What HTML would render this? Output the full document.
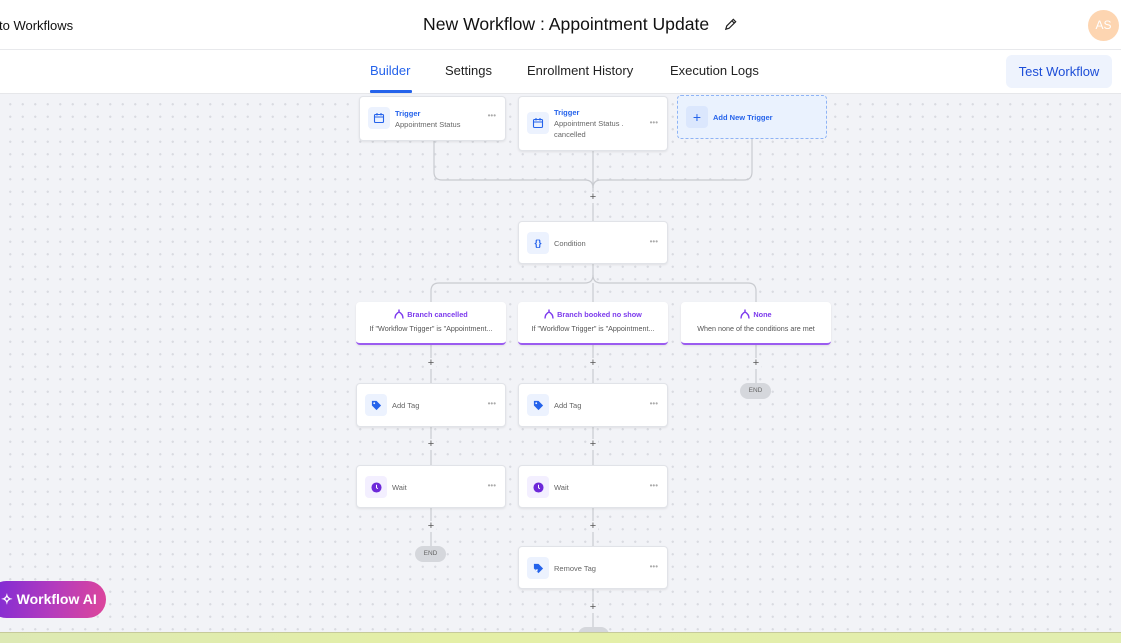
<!DOCTYPE html>
<html><head><meta charset="utf-8"><style>
*{box-sizing:border-box;margin:0;padding:0}
body{width:1121px;height:643px;overflow:hidden;position:relative;font-family:"Liberation Sans",sans-serif;background:#f2f3f7}
.canvas{position:absolute;left:0;top:94px;width:1121px;height:539px;background-color:#f2f3f7;background-image:radial-gradient(circle,#d9dbe1 1px,transparent 1.3px);background-size:12.5px 12.5px;background-position:4px 4px}
.hdr{position:absolute;left:0;top:0;width:1121px;height:50px;background:#fff;border-bottom:1px solid #e8e9ec}
.nav{position:absolute;left:0;top:50px;width:1121px;height:44px;background:#fff;border-bottom:1px solid #e6e7ea}
.abs{position:absolute}
.card{position:absolute;background:#fff;border:1px solid #e1e3e8;border-radius:4px;box-shadow:0 1px 2px rgba(0,0,0,.08)}
.ic{position:absolute;left:8px;width:22px;height:22px;border-radius:4px;background:#ecf2fe;display:flex;align-items:center;justify-content:center}
.ic.p{background:#f3efff}
.t{position:absolute;font-size:7.5px;color:#666}
.dots{position:absolute;right:9px;font-size:8px;color:#aaa}
.plus{position:absolute;font-size:11px;color:#555;width:10px;text-align:center;line-height:10px;background:#f2f3f7}
.end{position:absolute;width:31px;height:16px;border-radius:8px;background:#d5d7dc;font-size:6.5px;color:#666;text-align:center;line-height:16px}
.br{position:absolute;background:#fff;border-radius:4px;border-bottom:2px solid #9b5cf0;box-shadow:0 1px 2px rgba(0,0,0,.08);height:43px;text-align:center}
.br .h{font-size:7.3px;color:#7c3aed;font-weight:bold;margin-top:7px;display:flex;justify-content:center;align-items:center;gap:3px}
.br .s{font-size:7.2px;color:#555;margin-top:5px}
</style></head><body>
<div class="canvas"></div>
<div class="hdr">
 <div class="abs" style="left:-1px;top:18px;font-size:13px;color:#111">to Workflows</div>
 <div class="abs" style="left:423px;top:14px;font-size:17.6px;color:#111">New Workflow : Appointment Update</div>
 <svg class="abs" style="left:723px;top:17px" width="15" height="15" viewBox="0 0 16 16"><path d="M3 13l1-3.5 7-7 2.5 2.5-7 7zM9.5 4l2.5 2.5M3 13l3-0.8" fill="none" stroke="#222" stroke-width="1.3"/></svg>
 <div class="abs" style="left:1088px;top:10px;width:31px;height:31px;border-radius:50%;background:#fdd5b1;color:#fff;font-size:12px;text-align:center;line-height:31px">AS</div>
</div>
<div class="nav">
 <div class="abs" style="left:370px;top:13px;font-size:13px;color:#2563eb">Builder</div>
 <div class="abs" style="left:370px;top:40px;width:42px;height:3px;background:#2563eb;border-radius:1px"></div>
 <div class="abs" style="left:445px;top:13px;font-size:13px;color:#222">Settings</div>
 <div class="abs" style="left:527px;top:13px;font-size:13px;color:#222">Enrollment History</div>
 <div class="abs" style="left:670px;top:13px;font-size:13px;color:#222">Execution Logs</div>
 <div class="abs" style="left:1006px;top:5px;width:106px;height:33px;border-radius:6px;background:#eef3fd;color:#1d4ed8;font-size:13px;text-align:center;line-height:33px">Test Workflow</div>
</div>
<svg class="abs" style="left:0;top:0" width="1121" height="643">
<g fill="none" stroke="#c9cbd0" stroke-width="1.2">
<path d="M434 140V172q0 8 8 8H585q8 0 8 8"/>
<path d="M752 138V172q0 8 -8 8H601q-8 0 -8 8"/>
<path d="M593 150V192M593 203V221"/>
<path d="M593 263V275q0 8-8 8H439q-8 0-8 8V302"/>
<path d="M593 283V302M593 275q0 8 8 8H748q8 0 8 8V302"/>
<path d="M431 344V358M431 369V383M431 426V439M431 450V465M431 507V521M431 532V546"/>
<path d="M593 344V358M593 369V383M593 426V439M593 450V465M593 507V521M593 532V546M593 588V602M593 613V630"/>
<path d="M756 344V358M756 369V383"/>
</g></svg>
<div class="plus" style="left:588px;top:192px">+</div>
<div class="plus" style="left:426px;top:358px">+</div>
<div class="plus" style="left:588px;top:358px">+</div>
<div class="plus" style="left:751px;top:358px">+</div>
<div class="plus" style="left:426px;top:439px">+</div>
<div class="plus" style="left:588px;top:439px">+</div>
<div class="plus" style="left:426px;top:521px">+</div>
<div class="plus" style="left:588px;top:521px">+</div>
<div class="plus" style="left:588px;top:602px">+</div>
<div class="end" style="left:740px;top:383px">END</div>
<div class="end" style="left:415px;top:546px">END</div>
<div class="end" style="left:578px;top:627px"></div>

<div class="card" style="left:359px;top:96px;width:147px;height:45px">
 <div class="ic" style="top:10px"><svg width="12" height="12" viewBox="0 0 12 12"><rect x="1.5" y="2.5" width="9" height="8" rx="1" fill="none" stroke="#2563eb" stroke-width="1.1"/><path d="M1.5 5h9M4 1v2.5M8 1v2.5" stroke="#2563eb" stroke-width="1.1"/></svg></div>
 <div class="t" style="left:35px;top:12px;color:#2563eb;font-weight:bold">Trigger</div>
 <div class="t" style="left:35px;top:23px">Appointment Status</div>
 <div class="dots" style="top:14px">•••</div>
</div>
<div class="card" style="left:518px;top:96px;width:150px;height:55px">
 <div class="ic" style="top:15px"><svg width="12" height="12" viewBox="0 0 12 12"><rect x="1.5" y="2.5" width="9" height="8" rx="1" fill="none" stroke="#2563eb" stroke-width="1.1"/><path d="M1.5 5h9M4 1v2.5M8 1v2.5" stroke="#2563eb" stroke-width="1.1"/></svg></div>
 <div class="t" style="left:35px;top:11px;color:#2563eb;font-weight:bold">Trigger</div>
 <div class="t" style="left:35px;top:22px">Appointment Status .</div>
 <div class="t" style="left:35px;top:33px">cancelled</div>
 <div class="dots" style="top:21px">•••</div>
</div>
<div class="abs" style="left:677px;top:95px;width:150px;height:44px;border:1px dashed #8fb4f5;border-radius:4px;background:#eaf2fe">
 <div class="ic" style="top:10px;background:#dbe7fd;color:#2563eb;font-size:14px">+</div>
 <div class="t" style="left:35px;top:17px;color:#2563eb;font-weight:bold">Add New Trigger</div>
</div>
<div class="card" style="left:518px;top:221px;width:150px;height:43px">
 <div class="ic" style="top:10px;color:#2563eb;font-size:9px;font-weight:bold">{}</div>
 <div class="t" style="left:35px;top:17px">Condition</div>
 <div class="dots" style="top:15px">•••</div>
</div>
<div class="br" style="left:356px;top:302px;width:150px"><div class="h"><svg width="10" height="10" viewBox="0 0 10 10"><path d="M1 9.5Q1 5 5 3 9 5 9 9.5M5 3V0.5" fill="none" stroke="#7c3aed" stroke-width="1.4"/></svg>Branch cancelled</div><div class="s">If "Workflow Trigger" is "Appointment...</div></div>
<div class="br" style="left:518px;top:302px;width:150px"><div class="h"><svg width="10" height="10" viewBox="0 0 10 10"><path d="M1 9.5Q1 5 5 3 9 5 9 9.5M5 3V0.5" fill="none" stroke="#7c3aed" stroke-width="1.4"/></svg>Branch booked no show</div><div class="s">If "Workflow Trigger" is "Appointment...</div></div>
<div class="br" style="left:681px;top:302px;width:150px"><div class="h"><svg width="10" height="10" viewBox="0 0 10 10"><path d="M1 9.5Q1 5 5 3 9 5 9 9.5M5 3V0.5" fill="none" stroke="#7c3aed" stroke-width="1.4"/></svg>None</div><div class="s">When none of the conditions are met</div></div>
<div class="card" style="left:356px;top:383px;width:150px;height:44px"><div class="ic" style="top:10px"><svg width="11" height="11" viewBox="0 0 12 12"><path d="M1 1h5l5 5-5 5-5-5z" fill="#2563eb"/><circle cx="3.5" cy="3.5" r="1" fill="#ecf2fe"/></svg></div><div class="t" style="left:35px;top:17px">Add Tag</div><div class="dots" style="top:15px">•••</div></div>
<div class="card" style="left:518px;top:383px;width:150px;height:44px"><div class="ic" style="top:10px"><svg width="11" height="11" viewBox="0 0 12 12"><path d="M1 1h5l5 5-5 5-5-5z" fill="#2563eb"/><circle cx="3.5" cy="3.5" r="1" fill="#ecf2fe"/></svg></div><div class="t" style="left:35px;top:17px">Add Tag</div><div class="dots" style="top:15px">•••</div></div>
<div class="card" style="left:356px;top:465px;width:150px;height:43px"><div class="ic p" style="top:10px"><svg width="11" height="11" viewBox="0 0 12 12"><circle cx="6" cy="6" r="5.5" fill="#6d28d9"/><path d="M6 3v3.3l1.5 1" stroke="#fff" stroke-width="1.1" fill="none"/></svg></div><div class="t" style="left:35px;top:17px">Wait</div><div class="dots" style="top:15px">•••</div></div>
<div class="card" style="left:518px;top:465px;width:150px;height:43px"><div class="ic p" style="top:10px"><svg width="11" height="11" viewBox="0 0 12 12"><circle cx="6" cy="6" r="5.5" fill="#6d28d9"/><path d="M6 3v3.3l1.5 1" stroke="#fff" stroke-width="1.1" fill="none"/></svg></div><div class="t" style="left:35px;top:17px">Wait</div><div class="dots" style="top:15px">•••</div></div>
<div class="card" style="left:518px;top:546px;width:150px;height:43px"><div class="ic" style="top:10px"><svg width="11" height="11" viewBox="0 0 12 12"><path d="M1 1h5l5 5-5 5-5-5z" fill="#2563eb"/><path d="M3 7l2 2M5 7l-2 2" stroke="#fff" stroke-width="0.9"/></svg></div><div class="t" style="left:35px;top:17px">Remove Tag</div><div class="dots" style="top:15px">•••</div></div>

<div class="abs" style="left:-12px;top:581px;width:118px;height:37px;border-radius:19px;background:linear-gradient(100deg,#7a2ad8,#b43bbd 55%,#de469a);color:#fff;font-size:14px;font-weight:bold;line-height:37px;padding-left:13px">✧ Workflow AI</div>
<div class="abs" style="left:0;top:632px;width:1121px;height:11px;background:linear-gradient(90deg,#dde9b4,#e4efa6 40%,#e2eeb0);border-top:1px solid #c6ca9a"></div>
</body></html>
